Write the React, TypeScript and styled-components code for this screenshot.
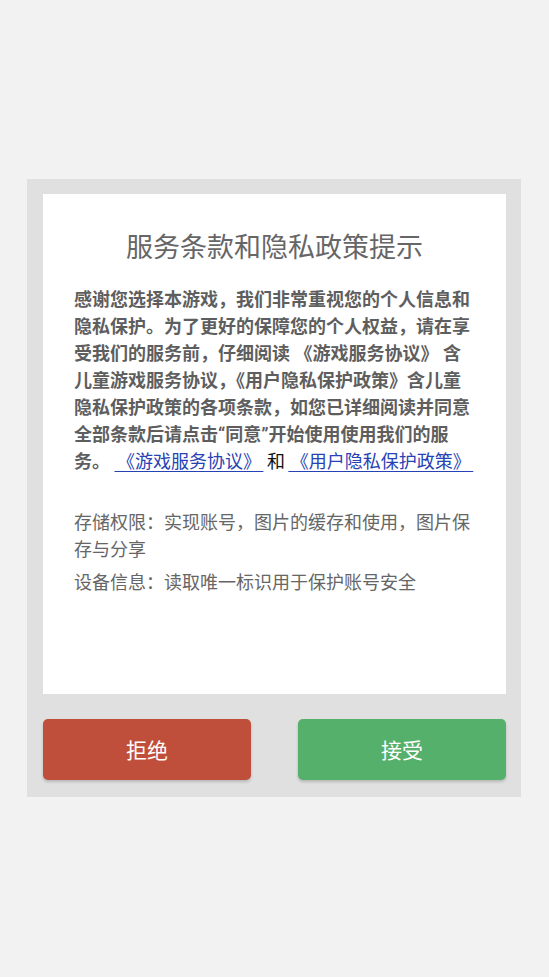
import styled, { createGlobalStyle } from 'styled-components';

const GlobalStyle = createGlobalStyle`
  html, body {
    margin: 0;
    padding: 0;
    background: #f2f2f2;
  }
  body {
    font-family: Roboto, 'Noto Sans CJK SC', sans-serif;
  }
`;

const permissions = [
  '存储权限：实现账号，图片的缓存和使用，图片保存与分享',
  '设备信息：读取唯一标识用于保护账号安全',
];

export default function App() {
  return (
    <Page>
      <GlobalStyle />
      <Panel>
        <Card>
          <Title>服务条款和隐私政策提示</Title>
          <Intro>
            感谢您选择本游戏，我们非常重视您的个人信息和隐私保护。为了更好的保障您的个人权益，请在享受我们的服务前，仔细阅读
            《游戏服务协议》 含儿童游戏服务协议，《用户隐私保护政策》含儿童隐私保护政策的各项条款，如您已详细阅读并同意全部条款后请点击“同意”开始使用使用我们的服务。{' '}
            <Link href="#"> 《游戏服务协议》 </Link>
            <Plain> 和 </Plain>
            <Link href="#"> 《用户隐私保护政策》 </Link>
          </Intro>
          <Permissions>
            {permissions.map((p) => (
              <Permission key={p}>{p}</Permission>
            ))}
          </Permissions>
        </Card>
        <Actions>
          <ActionButton $tone="reject">拒绝</ActionButton>
          <ActionButton $tone="accept">接受</ActionButton>
        </Actions>
      </Panel>
    </Page>
  );
}

const Page = styled.div`
  min-height: 977px;
  display: flex;
  align-items: center;
  justify-content: center;
  padding: 0 28px 2px 27px;
  box-sizing: border-box;
`;

const Panel = styled.div`
  width: 494px;
  background: #e0e0e0;
  padding: 15px 15px 17px 16px;
  box-sizing: border-box;
  display: flex;
  flex-direction: column;
  gap: 25px;
`;

const Card = styled.div`
  background: #ffffff;
  height: 500px;
  box-sizing: border-box;
  padding: 35px 31px 0 31px;
`;

const Title = styled.h1`
  margin: 0 0 19px;
  text-align: center;
  font-size: 27px;
  font-weight: 400;
  line-height: 38px;
  color: #666666;
`;

const Intro = styled.p`
  margin: 0;
  font-size: 18px;
  line-height: 27px;
  font-weight: 700;
  color: #5e5e5e;
`;

const Link = styled.a`
  font-weight: 400;
  color: #2742b4;
  text-decoration: underline;
  text-underline-offset: 3px;
  white-space: pre;
  word-spacing: -2px;
`;

const Plain = styled.span`
  font-weight: 400;
  color: #111111;
  white-space: pre;
  word-spacing: -1px;
`;

const Permissions = styled.div`
  margin-top: 34px;
  display: flex;
  flex-direction: column;
  gap: 6px;
`;

const Permission = styled.p`
  margin: 0;
  font-size: 18px;
  line-height: 27px;
  color: #666666;
`;

const Actions = styled.div`
  display: flex;
  justify-content: space-between;
`;

const ActionButton = styled.button<{ $tone: 'reject' | 'accept' }>`
  width: 208px;
  height: 61px;
  border: none;
  border-radius: 5px;
  background: ${({ $tone }) => ($tone === 'reject' ? '#bf4f3b' : '#55b06b')};
  color: #ffffff;
  font-family: Roboto, 'Noto Sans CJK SC', sans-serif;
  font-size: 21px;
  box-shadow: 0 2px 3px rgba(0, 0, 0, 0.18);
  cursor: pointer;
`;
